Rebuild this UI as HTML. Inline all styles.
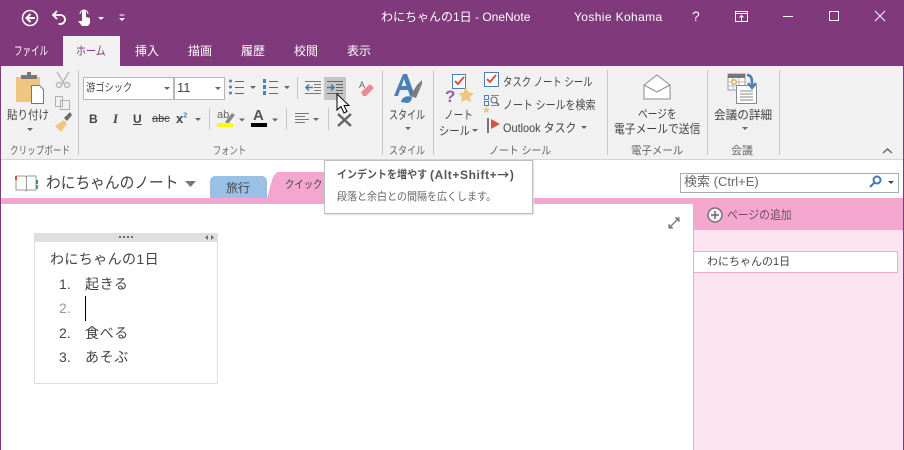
<!DOCTYPE html>
<html lang="ja"><head><meta charset="utf-8"><title>OneNote</title>
<style>
html,body{margin:0;padding:0;background:#fff}
#r{position:relative;width:904px;height:450px;overflow:hidden;background:#fff;font-family:"Liberation Sans","Noto Sans CJK JP",sans-serif;color:#444;font-size:12px}
.a{position:absolute;white-space:nowrap;line-height:16px;transform-origin:left center}
.b{position:absolute}
.w{color:#fff}
.g{color:#666}
.sep{position:absolute;width:1px;background:#c6c6c6}
svg{position:absolute;overflow:visible}
.tri{position:absolute;width:0;height:0;border-left:3px solid transparent;border-right:3px solid transparent;border-top:3px solid #666}
</style></head><body><div id="r">
<div class="b" style="left:0;top:0;width:904px;height:66px;background:#80397b"></div>
<div class="b" style="left:0;top:66px;width:904px;height:93px;background:#f1f1f1"></div>
<div class="b" style="left:0;top:159px;width:904px;height:1px;background:#d4d4d4"></div>
<div class="b" style="left:0;top:66px;width:1px;height:384px;background:#80397b"></div>
<div class="b" style="left:903px;top:66px;width:1px;height:384px;background:#80397b"></div>

<!-- QAT -->
<svg style="left:0;top:0" width="140" height="36" fill="none" stroke="#fff">
<circle cx="30" cy="18" r="7.500" stroke-width="1.500"/><path d="M35 18h-8M30.500 14l-4 4 4 4" stroke-width="2"/>
<path d="M57 11l-4 4 4 4M53.500 15h7a4.500 4.500 0 0 1 0 9h-2" stroke-width="1.800"/>
<path d="M82 21V12a2 2 0 0 1 4 0v5l4 1v5l-2 3h-6l-4-5z" fill="#fff" stroke="none"/><path d="M80 14a4 4 0 1 1 8 0" stroke-width="1"/>
<path d="M98 17h6l-3 3z" fill="#fff" stroke="none"/>
<path d="M119.500 15h5" stroke-width="1"/><path d="M119 18h6l-3 3z" fill="#fff" stroke="none"/>
</svg>
<div class="a w" style="left:381px;top:9px">わにちゃんの1日 - OneNote</div>
<div class="a w" style="left:574px;top:9px;letter-spacing:.38px">Yoshie Kohama</div>
<div class="a w" style="left:692px;top:8px;font-size:14px">?</div>
<svg style="left:730px;top:8px" width="174" height="24" fill="none" stroke="#fff">
<path d="M5.500 3.500h12v10h-12zM5.500 5.500h12M11.500 13V7.500M9.500 9.500l2-2 2 2"/>
<path d="M53 8.500h10"/><path d="M99.500 3.500h9v9h-9z"/>
<path d="M145 3l10 10M155 3l-10 10"/>
</svg>

<!-- Tabs -->
<div class="b" style="left:63px;top:36px;width:57px;height:30px;background:#f1f1f1"></div>
<div class="a w" style="left:14px;top:43px;transform:scaleX(.71)">ファイル</div>
<div class="a" style="left:76px;top:43px;color:#80397b;transform:scaleX(.83)">ホーム</div>
<div class="a w" style="left:135px;top:43px">挿入</div>
<div class="a w" style="left:188px;top:43px">描画</div>
<div class="a w" style="left:241px;top:43px">履歴</div>
<div class="a w" style="left:294px;top:43px">校閲</div>
<div class="a w" style="left:347px;top:43px">表示</div>

<!-- Clipboard -->
<svg style="left:0;top:66px" width="80" height="80">
<path d="M16 11h24v25H16z" fill="#efc67f"/><path d="M21 9h6v-3h4v3h6v4H21z" fill="#777"/>
<path d="M31.500 19.500h8l4 4v14h-12z" fill="#fff" stroke="#777"/>
<path d="M57 6l8 13M69 6l-8 13" stroke="#b9b9b9" stroke-width="1.500"/><circle cx="59" cy="19" r="2.500" fill="none" stroke="#b9b9b9" stroke-width="1.500"/><circle cx="67" cy="19" r="2.500" fill="none" stroke="#b9b9b9" stroke-width="1.500"/>
<path d="M55.500 30.500h7v10h-7zM60.500 34.500h9v9h-9z" fill="#f1f1f1" stroke="#b0b0b0"/>
<path d="M64 58l6-6 2 3-5 6z" fill="#6a6a6a" transform="translate(0,-6)"/><path d="M55 60l9-6 3 4-6 8z" fill="#efc67f"/>
</svg>
<div class="a" style="left:7px;top:107px;transform:scaleX(.875)">貼り付け</div>
<div class="tri" style="left:27px;top:128px"></div>
<div class="a g" style="left:10px;top:143px;font-size:11px;transform:scaleX(.78)">クリップボード</div>
<div class="sep" style="left:78px;top:70px;height:85px"></div>

<!-- Font -->
<div class="b" style="left:83px;top:77px;width:89px;height:21px;border:1px solid #b5b5b5;background:#fff"></div>
<div class="a" style="left:86px;top:80px;font-size:11px;transform:scaleX(.84)">游ゴシック</div>
<div class="tri" style="left:164px;top:87px"></div>
<div class="b" style="left:174px;top:77px;width:49px;height:21px;border:1px solid #b5b5b5;background:#fff"></div>
<div class="a" style="left:177px;top:80px;font-size:13px">11</div>
<div class="tri" style="left:215px;top:87px"></div>
<svg style="left:228px;top:78px" width="70" height="20">
<g fill="#4a80ba"><circle cx="2.500" cy="3" r="1.500"/><circle cx="2.500" cy="9" r="1.500"/><circle cx="2.500" cy="15" r="1.500"/><rect x="35" y="1" width="3" height="4"/><rect x="35" y="7" width="3" height="4"/><rect x="35" y="13" width="3" height="4"/></g>
<path d="M7 3.500h9M7 9.500h9M7 15.500h9M41 3.500h9M41 9.500h9M41 15.500h9" stroke="#666"/>
<path d="M22 8h6l-3 3zM56 8h6l-3 3z" fill="#666"/>
</svg>
<div class="sep" style="left:297px;top:77px;height:22px"></div>
<div class="a" style="left:89px;top:111px;font-weight:bold;font-size:12px">B</div>
<div class="a" style="left:113px;top:111px;font-style:italic;font-family:'Liberation Serif';font-size:13px;font-weight:bold">I</div>
<div class="a" style="left:133px;top:111px;font-weight:bold;text-decoration:underline">U</div>
<div class="a" style="left:152px;top:111px;font-size:11px;text-decoration:line-through">abc</div>
<div class="a" style="left:176px;top:111px;font-weight:bold;font-size:13px">x<sup style="font-size:7px;color:#4a80ba;line-height:0">2</sup></div>
<div class="tri" style="left:195px;top:118px"></div>
<div class="sep" style="left:209px;top:108px;height:22px"></div>
<div class="a g" style="left:217px;top:107px;font-size:11px">ab</div>
<svg style="left:216px;top:110px" width="110" height="20">
<path d="M9 12l7-9 3 2-7 9z" fill="#888"/><rect x="1" y="13" width="16" height="4" fill="#ffff00"/>
<path d="M23 8.500h6l-3 3z M56 8.500h6l-3 3z" fill="#666"/><rect x="35" y="13" width="16" height="4" fill="#000"/>
</svg>
<div class="a" style="left:253px;top:108px;font-size:15px;font-weight:bold;color:#555">A</div>
<div class="sep" style="left:286px;top:108px;height:22px"></div>

<svg style="left:305px;top:80px" width="18" height="16" fill="none">
<path d="M0 1.500h16M9 4.500h7M9 7.500h7M9 10.500h7M0 13.500h16" stroke="#777"/>
<path d="M8 7.500H1M4 4.500l-3 3 3 3" stroke="#3f7ab5" stroke-width="1.500"/>
</svg>
<div class="b" style="left:324px;top:77px;width:22px;height:23px;background:#c5c5c5"></div>
<svg style="left:327px;top:80px" width="18" height="16" fill="none">
<path d="M0 1.500h16M9 4.500h7M9 7.500h7M9 10.500h7M0 13.500h16" stroke="#666"/>
<path d="M0 7.500h7M4 4.500l3 3-3 3" stroke="#3f7ab5" stroke-width="1.500"/>
</svg>
<svg style="left:295px;top:113px" width="30" height="14" fill="none"><path d="M0 .5h14M0 3.500h10M0 6.500h14M0 9.500h10" stroke="#777"/><path d="M18 5h6l-3 3z" fill="#666"/></svg>
<div class="sep" style="left:328px;top:108px;height:22px"></div>
<svg style="left:337px;top:113px" width="16" height="14" fill="none"><path d="M1 1l13 12M14 1L1 13" stroke="#666" stroke-width="2.500"/></svg>
<svg style="left:358px;top:80px" width="18" height="18"><path d="M3 12l9-8 4 4-8 8H5z" fill="#ed8a97"/><text x="1" y="8" font-size="9" fill="#666" font-family="Liberation Sans">A</text></svg>
<div class="a g" style="left:213px;top:143px;font-size:11px;transform:scaleX(.75)">フォント</div>
<div class="sep" style="left:382px;top:70px;height:85px"></div>

<!-- cursor -->
<svg style="left:336px;top:93px" width="14" height="22"><path d="M1 1v16l4-3.500 3 6.500 3-1.500-3-6h5z" fill="#fff" stroke="#000"/></svg>

<!-- Style -->
<svg style="left:390px;top:72px" width="36" height="34">
<path d="M4 24L13 2h4l8 22h-5l-2-6H10l-2 6z M11.500 14h5L14 7z" fill="#4a80ba" fill-rule="evenodd"/>
<path d="M20 24l7-11 5-5v4l-6 14z" fill="#7d7d7d"/><path d="M11 30c1-5 6-7 11-5 0 3-2 6-5 6z" fill="#4a80ba"/>
</svg>
<div class="a" style="left:389px;top:107px;transform:scaleX(.75)">スタイル</div>
<div class="tri" style="left:405px;top:127px"></div>
<div class="a g" style="left:389px;top:143px;font-size:11px;transform:scaleX(.82)">スタイル</div>
<div class="sep" style="left:433px;top:70px;height:85px"></div>

<!-- Tags -->
<svg style="left:440px;top:72px" width="60" height="36">
<rect x="12.500" y="2.500" width="13" height="14" fill="#fff" stroke="#4a80ba"/>
<path d="M15 9l3 3 6-7" stroke="#d9533b" stroke-width="2" fill="none"/>
<path d="M26 15l2.500 5.500 5.500.6-4 3.900 1 5.500-5-2.800-5 2.800 1-5.500-4-3.900 5.500-.6z" fill="#efc67f"/>
<text x="5" y="30" font-size="17" font-weight="bold" fill="#9a58b5" font-family="Liberation Sans">?</text>
</svg>
<div class="a" style="left:444px;top:107px;transform:scaleX(.8)">ノート</div>
<div class="a" style="left:439px;top:123px;transform:scaleX(.86)">シール</div>
<div class="tri" style="left:472px;top:129px"></div>
<svg style="left:484px;top:72px" width="18" height="16"><rect x="0.500" y="0.500" width="14" height="14" fill="#fff" stroke="#4a80ba"/><path d="M3 7l3 3 6-7" stroke="#d9533b" stroke-width="2" fill="none"/></svg>
<div class="a" style="left:503px;top:74px;transform:scaleX(.78)">タスク ノート シール</div>
<svg style="left:484px;top:95px" width="18" height="18" fill="none"><rect x="0.500" y="0.500" width="4" height="4" stroke="#4a80ba"/><rect x="0.500" y="6.500" width="4" height="4" stroke="#4a80ba"/><path d="M7 .5h8M7 10.500h8" stroke="#888"/><circle cx="10" cy="5" r="3" stroke="#666"/><path d="M12 7l3 3" stroke="#666" stroke-width="1.500"/><path d="M2.500 11l1 2.500 2.500.5-2 1.500.5 2.500-2-1-2.500 1 .5-2.500-1.500-1.500 2.500-.5z" fill="#efc67f" stroke="none"/></svg>
<div class="a" style="left:503px;top:97px;transform:scaleX(.83)">ノート シールを検索</div>
<svg style="left:486px;top:118px" width="16" height="16"><rect x="1" y="0" width="2" height="15" fill="#777"/><path d="M5 1l9 5-9 5z" fill="#d9533b"/></svg>
<div class="a" style="left:503px;top:120px;transform:scaleX(.91)">Outlook タスク</div>
<div class="tri" style="left:581px;top:126px"></div>
<div class="a g" style="left:489px;top:143px;font-size:11px;transform:scaleX(.9)">ノート シール</div>
<div class="sep" style="left:607px;top:70px;height:85px"></div>

<!-- Email -->
<svg style="left:643px;top:74px" width="28" height="26"><path d="M1 11L14 1l13 10v14H1z" fill="#fff" stroke="#8c8c8c"/><path d="M1 11l13 7 13-7" fill="none" stroke="#8c8c8c"/></svg>
<div class="a" style="left:638px;top:106px;transform:scaleX(.81)">ページを</div>
<div class="a" style="left:614px;top:121px;transform:scaleX(.9)">電子メールで送信</div>
<div class="a g" style="left:631px;top:143px;font-size:11px;transform:scaleX(.95)">電子メール</div>
<div class="sep" style="left:707px;top:70px;height:85px"></div>

<!-- Meeting -->
<svg style="left:727px;top:73px" width="32" height="31" fill="none">
<rect x="1" y="1" width="17" height="16" fill="#fff" stroke="#999"/><rect x="1" y="1" width="17" height="4" fill="#777"/>
<path d="M1 9h17M1 13h17M6 5v12M12 5v12" stroke="#bbb"/><rect x="5" y="7" width="4" height="4" fill="#fff" stroke="#e08a2e"/>
<path d="M9.500 12.500h20v18h-20z" fill="#fff" stroke="#888"/><path d="M13 18h13M13 21h13M13 24h13M13 27h13" stroke="#888"/>
<path d="M20 2c4 0 5 3 5 7v3M21 10l4 5 4-5" stroke="#4a80ba" stroke-width="2.500"/>
</svg>
<div class="a" style="left:714px;top:107px;transform:scaleX(.97)">会議の詳細</div>
<div class="tri" style="left:742px;top:127px"></div>
<div class="a g" style="left:731px;top:143px;font-size:11px">会議</div>
<div class="sep" style="left:779px;top:70px;height:85px"></div>
<svg style="left:882px;top:146px" width="12" height="9" fill="none"><path d="M1 7l4.500-4L10 7" stroke="#666" stroke-width="1.500"/></svg>

<!-- Notebook bar -->
<svg style="left:15px;top:174px" width="24" height="18" fill="none"><path d="M1 2h9l1 1 1-1h9v14h-9l-1 1-1-1H1z" fill="#fff" stroke="#999"/><path d="M11.500 3v13" stroke="#999"/><rect x="0" y="2" width="2" height="4" fill="#d9533b"/><rect x="21" y="6" width="2" height="4" fill="#4a80ba"/><rect x="21" y="11" width="2" height="4" fill="#5a9a6a"/></svg>
<div class="a" style="left:46px;top:173px;font-size:16px;line-height:22px;transform:scaleX(.92)">わにちゃんのノート</div>
<svg style="left:185px;top:181px" width="12" height="8"><path d="M0 0h11L5.500 6z" fill="#777"/></svg>
<div class="b" style="left:210px;top:176px;width:57px;height:22px;background:#9bc0e6;border-radius:5px 5px 0 0"></div>
<div class="a" style="left:226px;top:180px;font-size:12px">旅行</div>
<svg style="left:267px;top:172px" width="70" height="26"><path d="M0 26C3 20 4 2 11 0h59v26z" fill="#f3a6ce"/></svg>
<div class="a" style="left:285px;top:177px;font-size:11px;transform:scaleX(.85)">クイック ノート</div>
<div class="b" style="left:0;top:198px;width:904px;height:6px;background:#f3a6ce"></div>
<div class="b" style="left:0;top:198px;width:1px;height:6px;background:#80397b"></div>
<div class="b" style="left:903px;top:198px;width:1px;height:6px;background:#80397b"></div>

<!-- Tooltip -->
<div class="b" style="left:324px;top:160px;width:207px;height:52px;background:#fff;border:1px solid #bebebe;box-shadow:1px 1px 1px #ddd"></div>
<div class="a" style="left:337px;top:167px;font-size:11px;font-weight:bold;color:#555;transform:scaleX(.91)">インデントを増やす</div>
<div class="a" style="left:430px;top:167px;font-size:12px;font-weight:bold;color:#555;letter-spacing:.6px">(Alt+Shift+<span style="font-family:'Noto Sans CJK JP'">→</span>)</div>
<div class="a" style="left:337px;top:189px;font-size:11px;color:#666;transform:scaleX(.91)">段落と余白との間隔を広くします。</div>

<!-- Search -->
<div class="b" style="left:680px;top:173px;width:217px;height:18px;border:1px solid #aaa;background:#fff"></div>
<div class="a g" style="left:684px;top:174px;font-size:13px">検索 (Ctrl+E)</div>
<svg style="left:868px;top:175px" width="28" height="14" fill="none"><circle cx="9" cy="5" r="3.500" stroke="#3f7ab5" stroke-width="2"/><path d="M6 8l-4 4" stroke="#3f7ab5" stroke-width="2"/><path d="M20 6h6l-3 3z" fill="#444"/></svg>

<!-- Page panel -->
<div class="b" style="left:693px;top:204px;width:210px;height:26px;background:#f3a6ce"></div>
<div class="b" style="left:693px;top:230px;width:210px;height:220px;background:#fce4f0;box-sizing:border-box;border-left:1px solid #f3a6ce"></div>
<svg style="left:707px;top:207px" width="16" height="16" fill="none"><circle cx="8" cy="8" r="7" fill="#f7f0f4" stroke="#666" stroke-width="1.300"/><path d="M8 4v8M4 8h8" stroke="#666" stroke-width="1.500"/></svg>
<div class="a" style="left:727px;top:207px;color:#6a5060;transform:scaleX(.9)">ページの追加</div>
<div class="b" style="left:693px;top:251px;width:203px;height:20px;background:#fff;border:1px solid #f3a6ce"></div>
<div class="a" style="left:707px;top:254px;font-size:11px">わにちゃんの1日</div>
<svg style="left:668px;top:217px" width="12" height="12" fill="none" stroke="#808080" stroke-width="1.500"><path d="M2 10l8-8"/><path d="M1 7v4h4M7 1h4v4" stroke-width="1.200" fill="#808080"/></svg>

<!-- Note container -->
<div class="b" style="left:34px;top:233px;width:182px;height:149px;border:1px solid #dedede;background:#fff"></div>
<div class="b" style="left:34px;top:233px;width:184px;height:9px;background:#dfdfdf"></div>
<svg style="left:118px;top:235px" width="100" height="6"><path d="M1 1h2v2H1zM5 1h2v2H5zM9 1h2v2H9zM13 1h2v2h-2z" fill="#707070"/><path d="M90 0v5l-3-2.500zM93 0v5l3-2.500z" fill="#707070"/></svg>
<div class="a" style="left:50px;top:250px;font-size:14px;line-height:18px;letter-spacing:.4px">わにちゃんの1日</div>
<div class="a" style="left:59px;top:275px;font-size:14px;line-height:18px">1.</div>
<div class="a" style="left:85px;top:275px;font-size:14px;line-height:18px;letter-spacing:.6px">起きる</div>
<div class="a" style="left:59px;top:299px;font-size:14px;line-height:18px;color:#999">2.</div>
<div class="b" style="left:85px;top:296px;width:1px;height:25px;background:#000"></div>
<div class="a" style="left:59px;top:324px;font-size:14px;line-height:18px">2.</div>
<div class="a" style="left:85px;top:324px;font-size:14px;line-height:18px;letter-spacing:.6px">食べる</div>
<div class="a" style="left:59px;top:348px;font-size:14px;line-height:18px">3.</div>
<div class="a" style="left:85px;top:348px;font-size:14px;line-height:18px;letter-spacing:.6px">あそぶ</div>
</div></body></html>
